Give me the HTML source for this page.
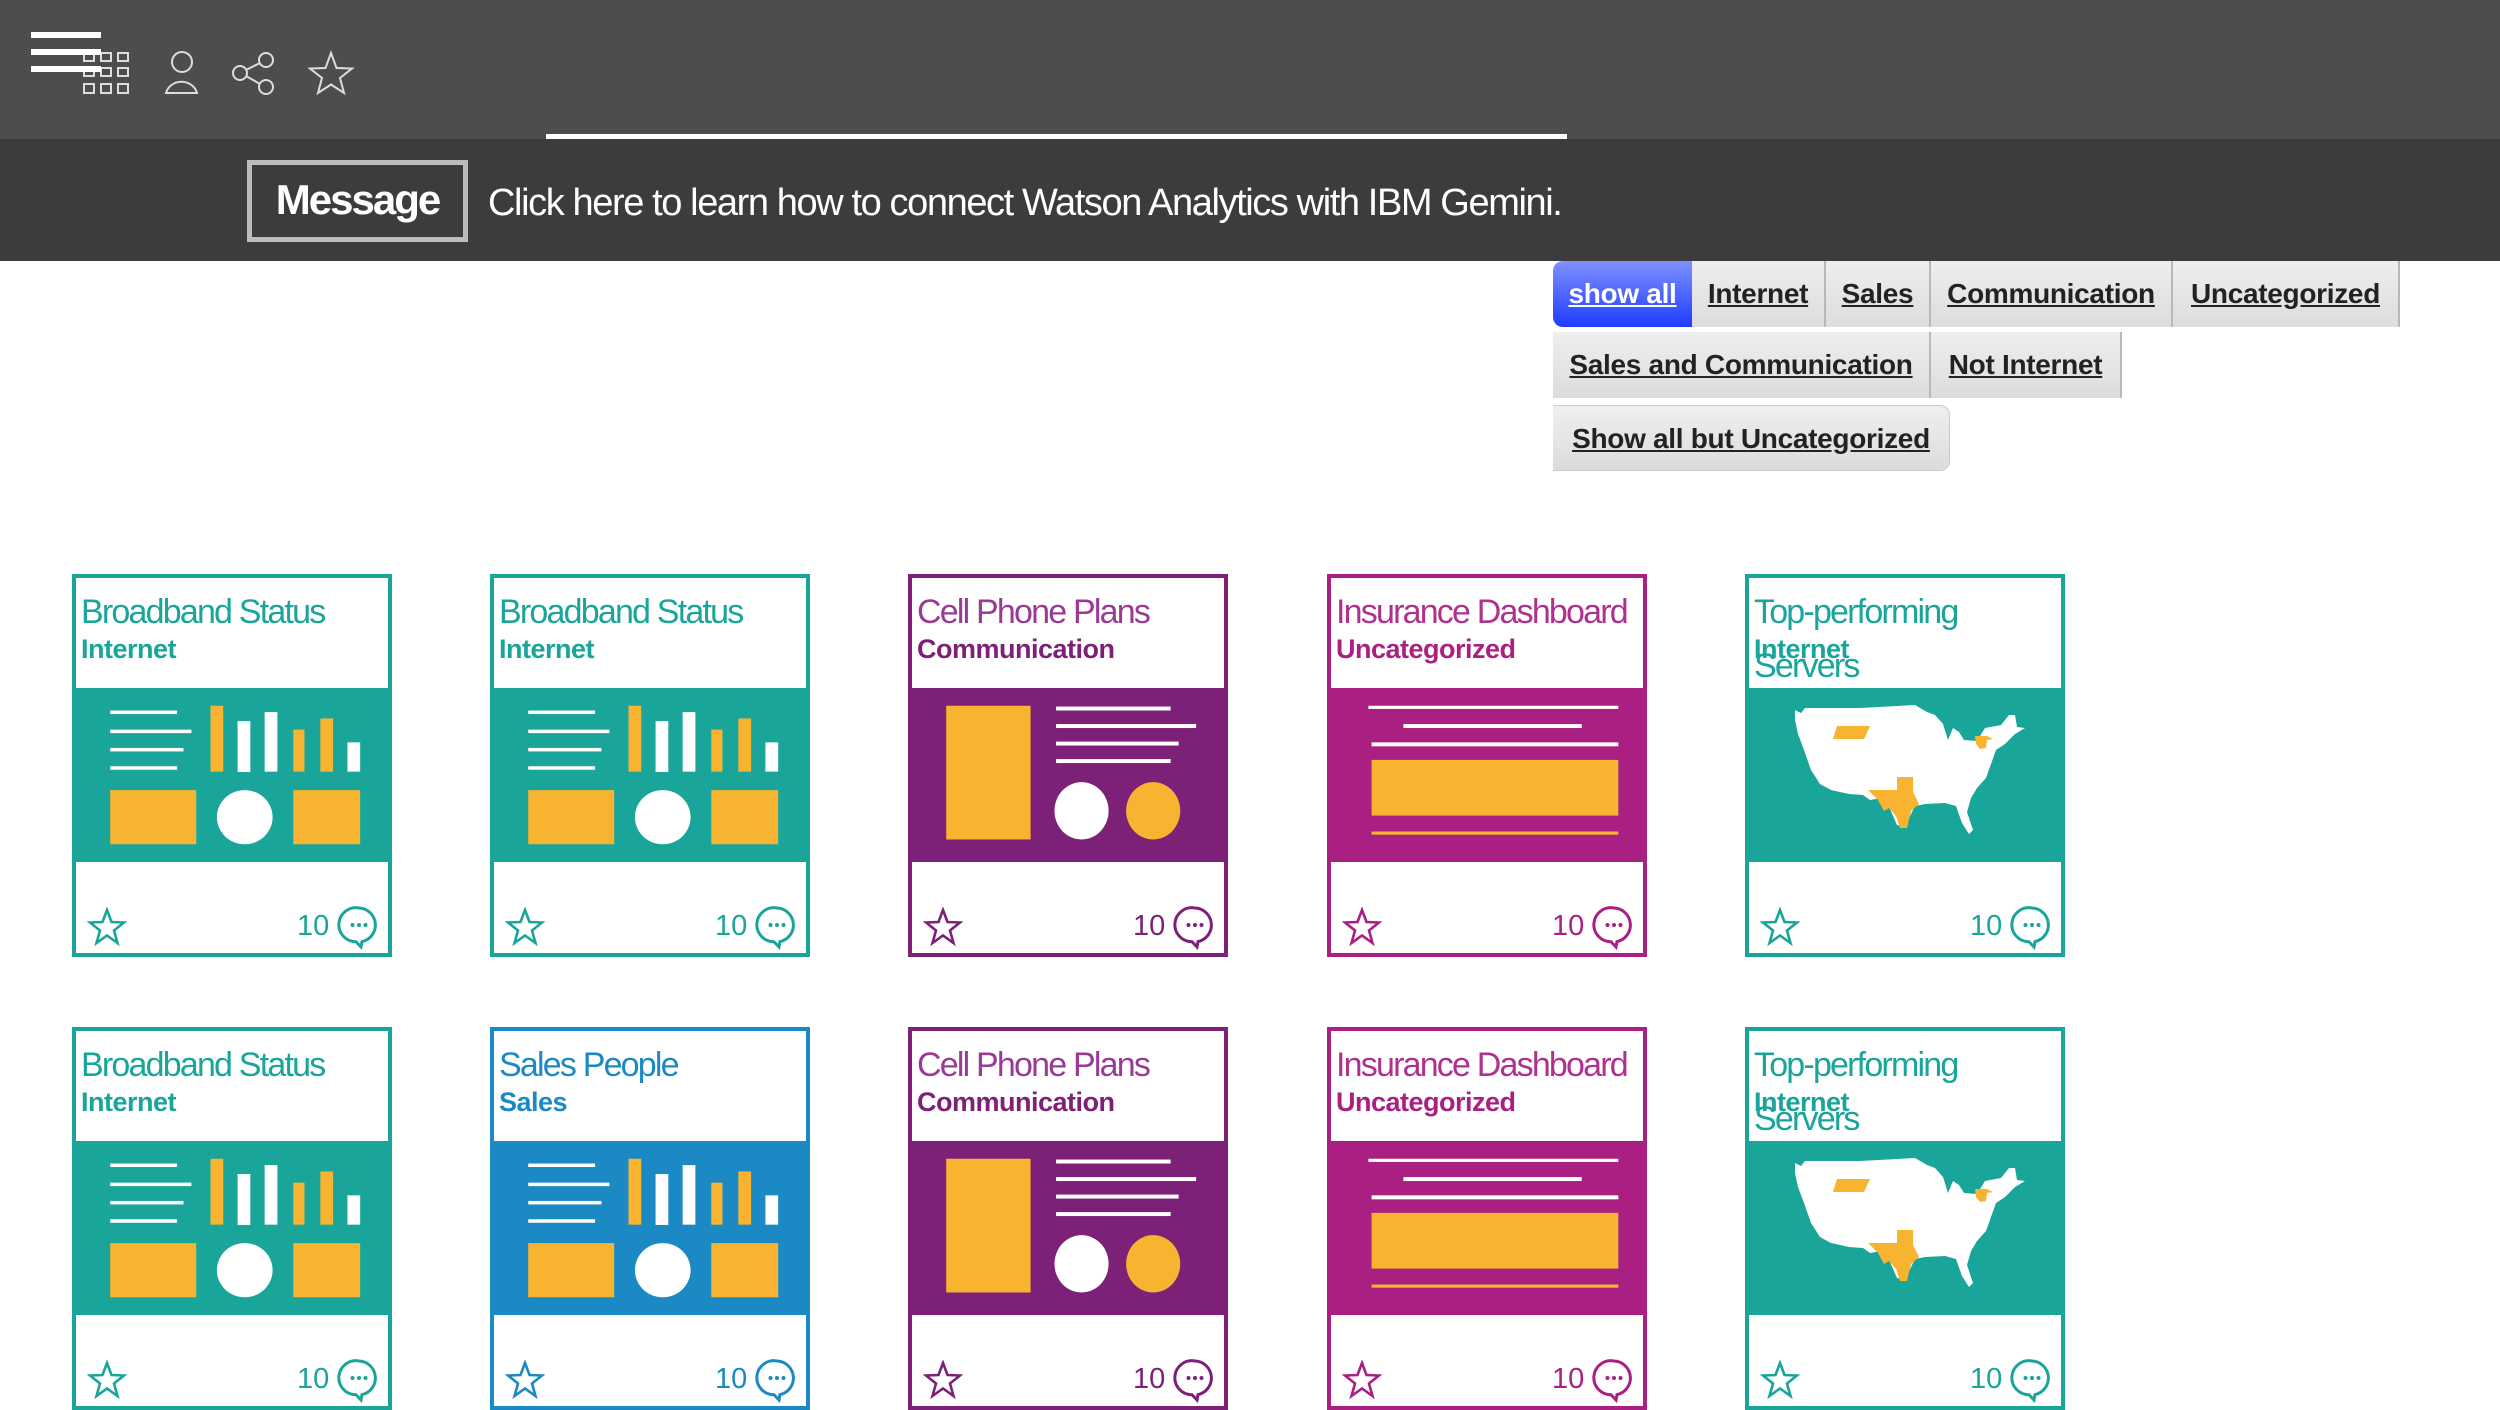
<!DOCTYPE html>
<html><head><meta charset="utf-8"><style>
*{margin:0;padding:0;box-sizing:border-box}
body{width:2500px;height:1403px;overflow:hidden;background:#fff;font-family:"Liberation Sans",Arial,sans-serif;position:relative}
.top{position:absolute;left:0;top:0;width:2500px;height:139px;background:#4d4d4d}
.msgbar{position:absolute;left:0;top:139px;width:2500px;height:122px;background:#3c3c3c}
.wl{position:absolute;left:546px;top:134px;width:1021px;height:5px;background:#fff}
.msgbox{position:absolute;left:247px;top:160px;width:221px;height:82px;border:5px solid #bdbdbd;color:#fff;font-size:42px;letter-spacing:-2px;text-align:center;line-height:70px;font-weight:bold}
.msgtxt{position:absolute;left:488px;top:182px;color:#fff;font-size:38px;letter-spacing:-1.4px;white-space:nowrap}
.btn{position:absolute;height:66px;background:linear-gradient(#efefef,#dcdcdc);border-right:2px solid #b8b8b8;font-weight:bold;font-size:28px;color:#222;text-decoration:underline;line-height:66px;text-align:center;letter-spacing:-0.3px;white-space:nowrap}
.btn.on{background:linear-gradient(#8091ff,#1e3cff);color:#fff;border-radius:10px 0 0 10px;border-right:none}
.card{position:absolute;width:320px;height:383px;border:4px solid;background:#fff}
.card .t{position:absolute;left:5px;top:15px;font-size:34px;letter-spacing:-1.8px;white-space:nowrap}
.card .s{position:absolute;left:5px;top:56px;font-size:27px;font-weight:bold;letter-spacing:-0.5px;white-space:nowrap}
.card svg.band{position:absolute;left:-4px;top:110px;width:320px;height:174px}
.card .n{position:absolute;left:221px;top:332px;font-size:29px}
.card svg.st{position:absolute;left:11px;top:329px}
.card svg.bb{position:absolute;left:259px;top:324px}
.teal{border-color:#1aa59b;color:#1aa59b}
.pur{border-color:#7d2078;color:#7d2078}
.mag{border-color:#a91f82;color:#a91f82}
.blue{border-color:#1b8ac4;color:#1b8ac4}
.sv{top:71px !important;line-height:1}
</style></head><body>
<svg width="0" height="0" style="position:absolute">
<defs>
<symbol id="bb" viewBox="0 0 201 109">
<g fill="#fff"><rect x="24" y="14" width="42" height="2.2"/><rect x="24" y="26" width="51" height="2.2"/><rect x="24" y="37.5" width="46" height="2.2"/><rect x="24" y="49" width="42" height="2.2"/>
<rect x="104" y="20.6" width="8" height="32"/><rect x="121" y="15" width="8" height="37.4"/><rect x="173" y="34" width="8" height="18.4"/>
<ellipse cx="108.5" cy="81" rx="17.5" ry="17"/></g>
<g fill="#f8b431"><rect x="87" y="11" width="8" height="41.4"/><rect x="139" y="26" width="7" height="26.4"/><rect x="156" y="19" width="8" height="33.4"/>
<rect x="24" y="64" width="54" height="34"/><rect x="139" y="64" width="42" height="34"/></g>
</symbol>
<symbol id="cp" viewBox="0 0 201 109">
<rect x="24" y="11" width="53" height="84" fill="#f8b431"/>
<g fill="#fff"><rect x="93" y="11.5" width="72" height="2.5"/><rect x="93" y="22.5" width="88" height="2.5"/><rect x="93" y="33.5" width="77" height="2.5"/><rect x="93" y="44.5" width="72" height="2.5"/>
<ellipse cx="109" cy="77" rx="17" ry="18"/></g>
<ellipse cx="154" cy="77" rx="17" ry="18" fill="#f8b431"/>
</symbol>
<symbol id="ins" viewBox="0 0 201 109">
<g fill="#fff"><rect x="26" y="11" width="157" height="2"/><rect x="48" y="22.5" width="112" height="2.5"/><rect x="28" y="34" width="155" height="2.5"/></g>
<rect x="28" y="45" width="155" height="35" fill="#f8b431"/>
<rect x="28" y="90" width="155" height="2" fill="#f8b431"/>
</symbol>
<symbol id="map" viewBox="0 0 320 174">
<path fill="#fff" d="M50 22 L56 25 L60 20 L115 20 L170 17 L182 24 L190 27 L198 36 L203 52 L208 40 L214 44 L219 52 L232 53 L240 40 L256 37 L264 27 L270 27 L272 39 L280 40 L270 46 L260 56 L251 62 L246 76 L241 90 L232 100 L226 110 L222 124 L228 142 L224 146 L217 135 L211 118 L200 115 L180 116 L170 118 L165 128 L160 139 L152 137 L145 121 L136 110 L125 112 L118 107 L104 106 L86 102 L75 96 L66 82 L59 62 L53 46 L50 32 Z"/>
<path fill="#f8b431" d="M152 89 L168 89 L168 104 L174 116 L166 123 L162 140 L155 140 L151 128 L144 120 L139 123 L133 112 L123 102 L152 102 Z"/>
<path fill="#f8b431" d="M92 38 L125 38 L119 51 L88 51 Z"/>
<path fill="#f8b431" d="M230 48 L242 48 L248 51 L242 52 L241 60 L235 61 L231 56 Z"/>
</symbol>
<symbol id="star" viewBox="0 0 40 40"><path d="M20 3 L24.5 15 L37 15.5 L27 23.5 L30.5 36 L20 28.5 L9.5 36 L13 23.5 L3 15.5 L15.5 15 Z" fill="none" stroke="currentColor" stroke-width="2.6" stroke-linejoin="miter"/></symbol>
<symbol id="bub" viewBox="0 0 48 50"><path d="M24 6 A17 17 0 1 0 21 39.7 L26 45 L27 39.6 A17 17 0 0 0 24 6 Z" fill="none" stroke="currentColor" stroke-width="3"/><circle cx="17.5" cy="23" r="2" fill="currentColor"/><circle cx="24" cy="23" r="2" fill="currentColor"/><circle cx="30.5" cy="23" r="2" fill="currentColor"/></symbol>
</defs></svg>

<div class="top"></div>
<div class="wl"></div>
<div class="msgbar"></div>
<svg style="position:absolute;left:0;top:0" width="400" height="120">
<g fill="none" stroke="#ddd" stroke-width="2">
<rect x="84" y="53" width="10" height="8"/><rect x="101" y="53" width="10" height="8"/><rect x="118" y="53" width="10" height="8"/>
<rect x="84" y="68" width="10" height="8"/><rect x="101" y="68" width="10" height="8"/><rect x="118" y="68" width="10" height="8"/>
<rect x="84" y="84" width="10" height="9"/><rect x="101" y="84" width="10" height="9"/><rect x="118" y="84" width="10" height="9"/>
<circle cx="182" cy="62" r="10"/><path d="M166 93 A16 15 0 0 1 197 93 Z"/>
<circle cx="240" cy="73" r="7"/><circle cx="266" cy="60" r="7"/><circle cx="266" cy="87" r="7"/><path d="M246 70 L260 63 M246 76 L260 84"/>
<path d="M331 53 L336.5 68 L352 68.5 L340 78 L344 93 L331 84.5 L318 93 L322 78 L310 68.5 L325.5 68 Z"/>
</g>
<g fill="#fff"><rect x="31" y="32" width="70" height="6"/><rect x="31" y="49" width="70" height="6"/><rect x="31" y="66" width="70" height="6"/></g>
</svg>
<div class="msgbox">Message</div>
<div class="msgtxt">Click here to learn how to connect Watson Analytics with IBM Gemini.</div>

<div class="btn on" style="left:1553px;top:261px;width:139px">show all</div>
<div class="btn" style="left:1692px;top:261px;width:134px">Internet</div>
<div class="btn" style="left:1826px;top:261px;width:105px">Sales</div>
<div class="btn" style="left:1931px;top:261px;width:242px">Communication</div>
<div class="btn" style="left:2173px;top:261px;width:227px">Uncategorized</div>
<div class="btn" style="left:1553px;top:332px;width:378px">Sales and Communication</div>
<div class="btn" style="left:1931px;top:332px;width:191px">Not Internet</div>
<div class="btn" style="left:1553px;top:405px;width:397px;border-radius:0 10px 10px 0;border:1px solid #ccc;border-left:none">Show all but Uncategorized</div>

<div class="card teal" style="left:72px;top:574px"><div class="t">Broadband Status</div><div class="s">Internet</div>
<svg class="band" viewBox="0 0 320 174"><rect width="320" height="174" fill="#1aa59b"/><use href="#bb" x="0" y="0" width="320" height="174"/></svg>
<svg class="st" width="40" height="40"><use href="#star"/></svg><div class="n">10</div><svg class="bb" width="48" height="50"><use href="#bub"/></svg></div>

<div class="card teal" style="left:490px;top:574px"><div class="t">Broadband Status</div><div class="s">Internet</div>
<svg class="band" viewBox="0 0 320 174"><rect width="320" height="174" fill="#1aa59b"/><use href="#bb" x="0" y="0" width="320" height="174"/></svg>
<svg class="st" width="40" height="40"><use href="#star"/></svg><div class="n">10</div><svg class="bb" width="48" height="50"><use href="#bub"/></svg></div>

<div class="card pur" style="left:908px;top:574px"><div class="t" style="color:#9a3a95">Cell Phone Plans</div><div class="s">Communication</div>
<svg class="band" viewBox="0 0 320 174"><rect width="320" height="174" fill="#7d2078"/><use href="#cp" x="0" y="0" width="320" height="174"/></svg>
<svg class="st" width="40" height="40"><use href="#star"/></svg><div class="n">10</div><svg class="bb" width="48" height="50"><use href="#bub"/></svg></div>

<div class="card mag" style="left:1327px;top:574px"><div class="t" style="color:#b0308e">Insurance Dashboard</div><div class="s">Uncategorized</div>
<svg class="band" viewBox="0 0 320 174"><rect width="320" height="174" fill="#a91f82"/><use href="#ins" x="0" y="0" width="320" height="174"/></svg>
<svg class="st" width="40" height="40"><use href="#star"/></svg><div class="n">10</div><svg class="bb" width="48" height="50"><use href="#bub"/></svg></div>

<div class="card teal" style="left:1745px;top:574px"><div class="t">Top-performing</div><div class="s">Internet</div><div class="t sv">Servers</div>
<svg class="band" viewBox="0 0 320 174"><rect width="320" height="174" fill="#1aa59b"/><use href="#map" x="0" y="0" width="320" height="174"/></svg>
<svg class="st" width="40" height="40"><use href="#star"/></svg><div class="n">10</div><svg class="bb" width="48" height="50"><use href="#bub"/></svg></div>

<div class="card teal" style="left:72px;top:1027px"><div class="t">Broadband Status</div><div class="s">Internet</div>
<svg class="band" viewBox="0 0 320 174"><rect width="320" height="174" fill="#1aa59b"/><use href="#bb" x="0" y="0" width="320" height="174"/></svg>
<svg class="st" width="40" height="40"><use href="#star"/></svg><div class="n">10</div><svg class="bb" width="48" height="50"><use href="#bub"/></svg></div>

<div class="card blue" style="left:490px;top:1027px"><div class="t">Sales People</div><div class="s">Sales</div>
<svg class="band" viewBox="0 0 320 174"><rect width="320" height="174" fill="#1b8ac4"/><use href="#bb" x="0" y="0" width="320" height="174"/></svg>
<svg class="st" width="40" height="40"><use href="#star"/></svg><div class="n">10</div><svg class="bb" width="48" height="50"><use href="#bub"/></svg></div>

<div class="card pur" style="left:908px;top:1027px"><div class="t" style="color:#9a3a95">Cell Phone Plans</div><div class="s">Communication</div>
<svg class="band" viewBox="0 0 320 174"><rect width="320" height="174" fill="#7d2078"/><use href="#cp" x="0" y="0" width="320" height="174"/></svg>
<svg class="st" width="40" height="40"><use href="#star"/></svg><div class="n">10</div><svg class="bb" width="48" height="50"><use href="#bub"/></svg></div>

<div class="card mag" style="left:1327px;top:1027px"><div class="t" style="color:#b0308e">Insurance Dashboard</div><div class="s">Uncategorized</div>
<svg class="band" viewBox="0 0 320 174"><rect width="320" height="174" fill="#a91f82"/><use href="#ins" x="0" y="0" width="320" height="174"/></svg>
<svg class="st" width="40" height="40"><use href="#star"/></svg><div class="n">10</div><svg class="bb" width="48" height="50"><use href="#bub"/></svg></div>

<div class="card teal" style="left:1745px;top:1027px"><div class="t">Top-performing</div><div class="s">Internet</div><div class="t sv">Servers</div>
<svg class="band" viewBox="0 0 320 174"><rect width="320" height="174" fill="#1aa59b"/><use href="#map" x="0" y="0" width="320" height="174"/></svg>
<svg class="st" width="40" height="40"><use href="#star"/></svg><div class="n">10</div><svg class="bb" width="48" height="50"><use href="#bub"/></svg></div>
</body></html>
